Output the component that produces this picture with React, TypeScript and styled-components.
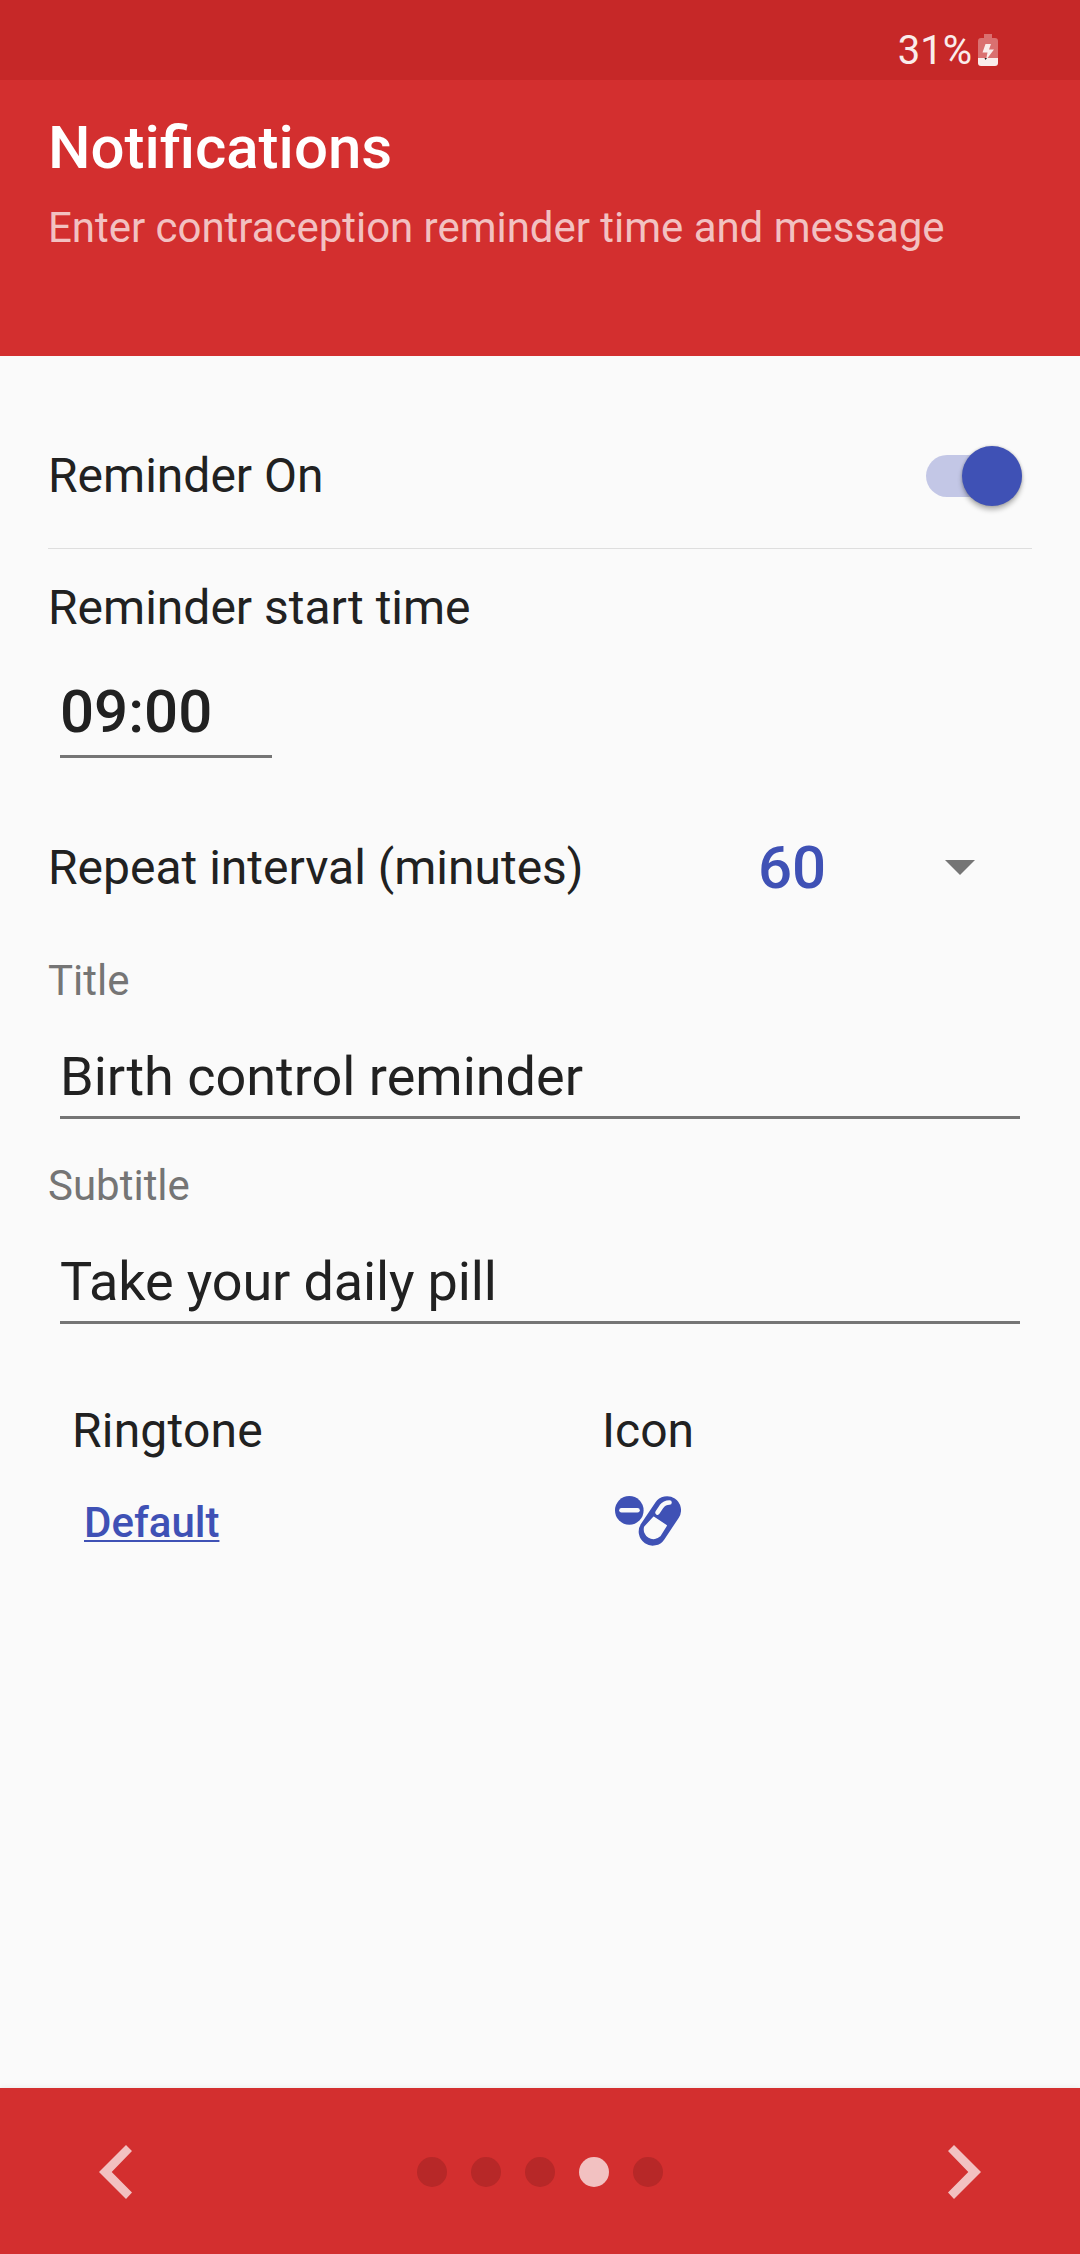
import React, { useState } from "react";
import styled, { createGlobalStyle } from "styled-components";

const GlobalStyle = createGlobalStyle`
  * { box-sizing: border-box; }
  body {
    margin: 0;
    background: #fafafa;
    font-family: Roboto, sans-serif;
    color: #212121;
  }
  button, input {
    font: inherit;
    color: inherit;
    border: 0;
    background: none;
    padding: 0;
    margin: 0;
    outline: 0;
  }
`;

const Screen = styled.div`
  display: flex;
  flex-direction: column;
  width: 1080px;
  height: 2254px;
  overflow: hidden;
`;

const StatusBar = styled.div`
  display: flex;
  justify-content: flex-end;
  height: 80px;
  padding: 30px 82px 0 0;
  gap: 6px;
  background: #c62828;
  color: #faeceb;
  font-size: 40px;
  line-height: 42px;
`;

const BatteryIcon = styled.svg`
  width: 20px;
  height: 32px;
  margin-top: 4px;
`;

const Header = styled.header`
  height: 276px;
  padding: 33px 48px 0;
  background: #d32f2f;
`;

const Heading = styled.h1`
  margin: 0;
  font-size: 60px;
  line-height: 70px;
  font-weight: 500;
  color: #fff;
`;

const Description = styled.p`
  margin: 20px 0 0;
  font-size: 42px;
  line-height: 50px;
  letter-spacing: -0.03px;
  color: #f2c1c1;
`;

const Form = styled.main`
  display: flex;
  flex-direction: column;
  flex: 1;
  padding: 48px 48px 0;
`;

const Row = styled.div<{ $height: number }>`
  display: flex;
  align-items: center;
  height: ${(p) => p.$height}px;
`;

const SwitchRow = styled(Row)`
  justify-content: space-between;
  padding-right: 10.5px;
`;

const Label = styled.span<{ $tracking?: number }>`
  font-size: 48px;
  line-height: 56px;
  letter-spacing: ${(p) => p.$tracking ?? 0}px;
`;

const Track = styled.button<{ $on: boolean }>`
  display: flex;
  align-items: center;
  justify-content: ${(p) => (p.$on ? "flex-end" : "flex-start")};
  width: 95.5px;
  height: 42px;
  border-radius: 21px;
  background: ${(p) => (p.$on ? "#c3c7e6" : "#bdbdbd")};
`;

const Thumb = styled.span<{ $on: boolean }>`
  width: 60px;
  height: 60px;
  flex: none;
  border-radius: 50%;
  background: ${(p) => (p.$on ? "#3f51b5" : "#fafafa")};
  box-shadow: 0 4px 5px rgba(0, 0, 0, 0.27), 0 0 3px rgba(0, 0, 0, 0.2);
`;

const Divider = styled.div`
  height: 1px;
  background: #dedede;
`;

const TimeLabel = styled(Label)`
  margin-top: 31px;
`;

const Field = styled.input<{ $bold?: boolean; $size: number; $tracking?: number }>`
  font-size: ${(p) => p.$size}px;
  font-weight: ${(p) => (p.$bold ? 500 : 400)};
  letter-spacing: ${(p) => p.$tracking ?? 0}px;
  border-bottom: 3px solid #757575;
  margin: 0 12px;
`;

const TimeField = styled(Field)`
  width: 212px;
  height: 94px;
  margin-top: 28px;
  padding-top: 4px;
`;

const TextField = styled(Field)`
  height: 95px;
  margin-top: 18px;
  padding-top: 13px;
`;

const IntervalRow = styled(Row)`
  margin-top: 60px;
`;

const IntervalLabel = styled(Label)`
  width: 710px;
`;

const Interval = styled.span`
  width: 187px;
  font-size: 60px;
  line-height: 70px;
  font-weight: 500;
  color: #3f51b5;
`;

const Caret = styled.svg`
  width: 30px;
  height: 15px;
  margin-bottom: 1px;
`;

const Caption = styled.label<{ $top: number }>`
  margin-top: ${(p) => p.$top}px;
  font-size: 42px;
  line-height: 50px;
  color: #757575;
`;

const Options = styled.div`
  display: grid;
  grid-template-columns: 530px 1fr;
  margin-top: 79px;
  padding-left: 24px;
`;

const Option = styled.div`
  display: flex;
  flex-direction: column;
  align-items: flex-start;
`;

const RingtoneLink = styled.button`
  margin: 39px 0 0 12px;
  font-size: 42px;
  line-height: 50px;
  font-weight: 500;
  color: #3f51b5;
  text-decoration: underline;
  text-decoration-thickness: 2px;
  text-underline-offset: 3px;
`;

const PillIcon = styled.svg`
  width: 66px;
  height: 50px;
  margin: 37px 0 0 13px;
`;

const Footer = styled.footer`
  display: flex;
  align-items: center;
  justify-content: space-between;
  height: 166px;
  padding: 2px 99px 0;
  background: #d32f2f;
  box-shadow: 0 0 6px rgba(0, 0, 0, 0.08);
`;

const NavButton = styled.button`
  display: flex;
  width: 33px;
  height: 54px;
`;

const Dots = styled.div`
  display: flex;
  gap: 24px;
`;

const Dot = styled.span<{ $active: boolean }>`
  width: 30px;
  height: 30px;
  border-radius: 50%;
  background: ${(p) => (p.$active ? "#f2c1c1" : "#b72828")};
`;

export default function App() {
  const [on, setOn] = useState(true);
  const [step, setStep] = useState(3);

  return (
    <Screen>
      <GlobalStyle />
      <StatusBar>
        <span>31%</span>
        <BatteryIcon viewBox="0 0 20 32">
          <path d="M6 0h8v4h3a3 3 0 0 1 3 3v17H0V7a3 3 0 0 1 3-3h3z" fill="#da7070" />
          <path d="M0 24h20v5a3 3 0 0 1-3 3H3a3 3 0 0 1-3-3z" fill="#faeceb" />
          <path d="M7.500 10h5.500l-2 5.500h5L8 26l1.500-7.500h-5z" fill="#faeceb" />
          <path d="M6.500 24h2.500l-1.500 2z" fill="#222" />
        </BatteryIcon>
      </StatusBar>
      <Header>
        <Heading>Notifications</Heading>
        <Description>Enter contraception reminder time and message</Description>
      </Header>
      <Form>
        <SwitchRow $height={144}>
          <Label>Reminder On</Label>
          <Track $on={on} onClick={() => setOn(!on)} role="switch" aria-checked={on}>
            <Thumb $on={on} />
          </Track>
        </SwitchRow>
        <Divider />
        <TimeLabel>Reminder start time</TimeLabel>
        <TimeField $size={60} $bold defaultValue="09:00" />
        <IntervalRow $height={100}>
          <IntervalLabel>Repeat interval (minutes)</IntervalLabel>
          <Interval>60</Interval>
          <Caret viewBox="0 0 30 15">
            <path d="M0 0h30L15 15z" fill="#757575" />
          </Caret>
        </IntervalRow>
        <Caption $top={38}>Title</Caption>
        <TextField $size={54} defaultValue="Birth control reminder" />
        <Caption $top={42}>Subtitle</Caption>
        <TextField $size={54} $tracking={-0.15} defaultValue="Take your daily pill" />
        <Options>
          <Option>
            <Label $tracking={0.2}>Ringtone</Label>
            <RingtoneLink>Default</RingtoneLink>
          </Option>
          <Option>
            <Label>Icon</Label>
            <PillIcon viewBox="0 0 66 50" fill="none">
              <circle cx="14.300" cy="14.400" r="14.300" fill="#3f51b5" />
              <path d="M6.500 14.300h16" stroke="#fafafa" strokeWidth="4.600" strokeLinecap="round" />
              <path d="M52 14.200L37.700 35.600" stroke="#3f51b5" strokeWidth="28" strokeLinecap="round" />
              <path d="M38.800 21.300L51.200 29.600L44.800 39.800A9 9 0 0 1 29.800 31z" fill="#fafafa" stroke="#fafafa" strokeWidth="1.500" strokeLinejoin="round" />
              <path d="M42.500 16.500L46.500 10.500Q49.500 6.500 54.500 6.500" stroke="#fafafa" strokeWidth="4.600" strokeLinecap="round" />
            </PillIcon>
          </Option>
        </Options>
      </Form>
      <Footer>
        <NavButton aria-label="Previous" onClick={() => setStep(Math.max(0, step - 1))}>
          <svg width="33" height="54" viewBox="0 0 33 54">
            <path d="M27 0L33 6L12.700 27L33 47.600L27 54L0 27z" fill="#f2c1c1" />
          </svg>
        </NavButton>
        <Dots>
          {[0, 1, 2, 3, 4].map((i) => (
            <Dot key={i} $active={i === step} />
          ))}
        </Dots>
        <NavButton aria-label="Next" onClick={() => setStep(Math.min(4, step + 1))}>
          <svg width="33" height="54" viewBox="0 0 33 54">
            <path d="M6 0L0 6L20.300 27L0 47.600L6 54L33 27z" fill="#f2c1c1" />
          </svg>
        </NavButton>
      </Footer>
    </Screen>
  );
}
